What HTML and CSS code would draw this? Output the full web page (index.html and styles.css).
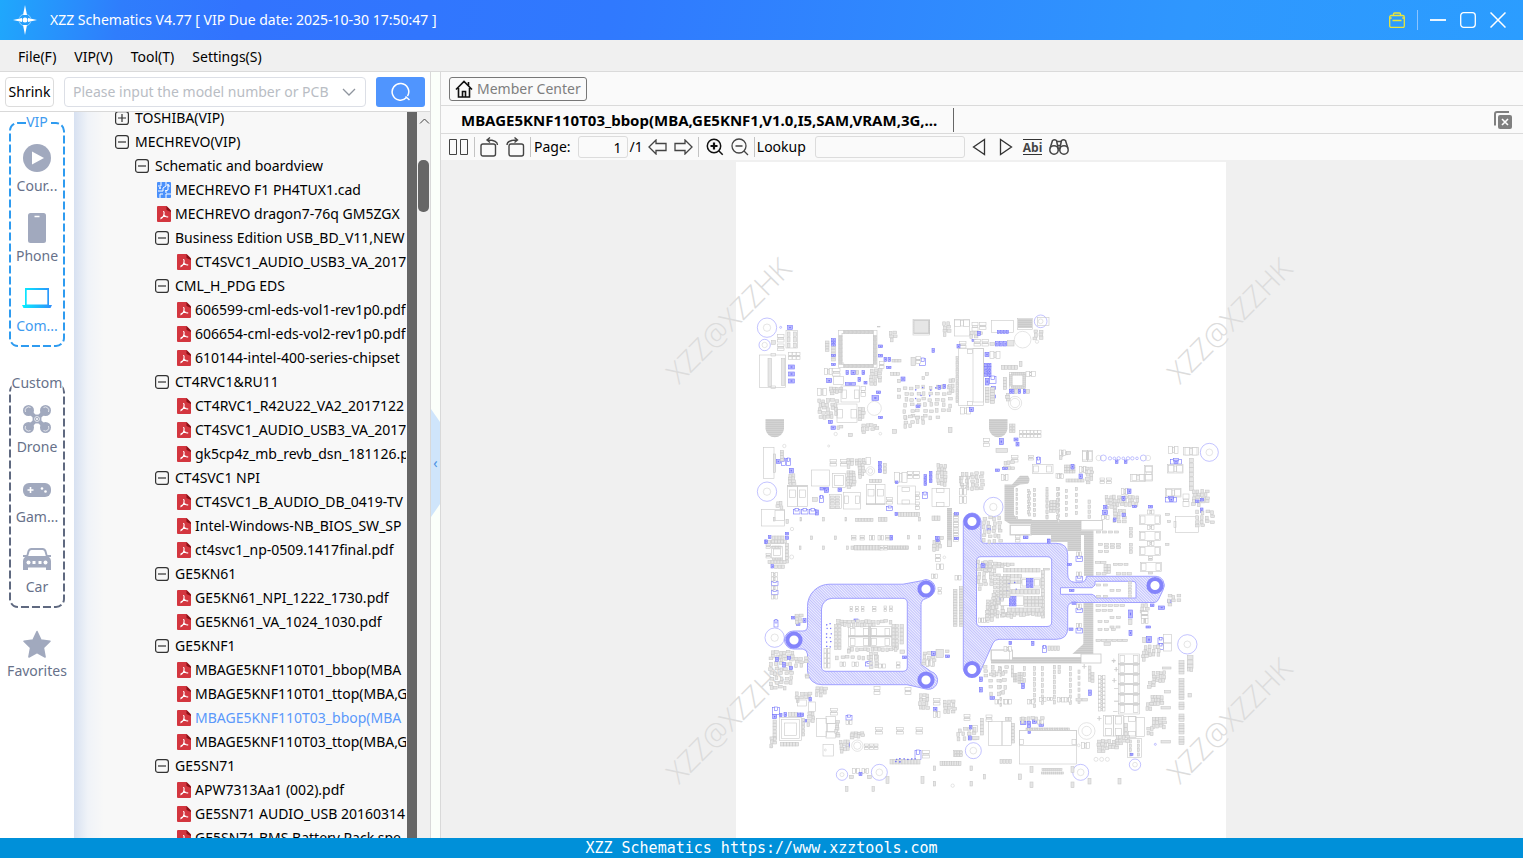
FILE: index.html
```html
<!DOCTYPE html>
<html lang="en">
<head>
<meta charset="utf-8">
<title>XZZ Schematics</title>
<link rel="stylesheet" href="styles.css">
</head>
<body>
<svg width="0" height="0" class="defs" aria-hidden="true">
  <defs>
    <linearGradient id="cyan" x1="0" x2="1"><stop offset="0" stop-color="#06f0ff"/><stop offset="1" stop-color="#2f8dfb"/></linearGradient>
    <symbol id="i-pdf" viewBox="0 0 14 16"><path d="M1 0H9.500L14 4.500V15a1 1 0 0 1-1 1H1a1 1 0 0 1-1-1V1a1 1 0 0 1 1-1z" fill="#d3363f"/><path d="M9.500 0L14 4.500V6L9.500 4z" fill="#8c1219"/><path d="M6.500 5.500c.8 0 .8 2.800-.1 4.600-.7 1.400-1.800 2.700-2.600 2.600M6.800 8.500c1 1.800 2.600 2.700 4 2.400M4 11.800c1.500-1.300 3.500-1.700 5-1.500" fill="none" stroke="#fff" stroke-width="1.100" stroke-linecap="round"/></symbol>
    <symbol id="i-cad" viewBox="0 0 14 16"><rect width="14" height="16" rx="1" fill="#4a90fb"/><path d="M4 0v4H1M9 0v4l-3 2v3H1M13 4h-2v4L8 9M3 16v-4h3M9 16v-4h5M9 8v3" fill="none" stroke="#fff"/><circle cx="3" cy="6" r="1" fill="#fff"/><circle cx="11" cy="3" r="1" fill="#fff"/></symbol>
    <symbol id="i-minus" viewBox="0 0 14 14"><rect x=".6" y=".6" width="12.800" height="12.800" rx="2.500" fill="#f8f8f8" stroke="#333" stroke-width="1.200"/><path d="M3 7h8" stroke="#333" stroke-width="1.200"/></symbol>
    <symbol id="i-plus" viewBox="0 0 14 14"><rect x=".6" y=".6" width="12.800" height="12.800" rx="2.500" fill="#f8f8f8" stroke="#333" stroke-width="1.200"/><path d="M3 7h8M7 3v8" stroke="#333" stroke-width="1.200"/></symbol>
    <pattern id="hatch" width="2" height="2" patternUnits="userSpaceOnUse" patternTransform="rotate(-45)"><rect width="2" height="2" fill="#eeeeff"/><rect width="1" height="2" fill="#c2c2fc"/></pattern>
    <pattern id="lines" width="4" height="2" patternUnits="userSpaceOnUse"><rect width="4" height="2" fill="#d3d3d3"/><rect width="4" height="1" fill="#cacaca"/></pattern>
  </defs>
</svg>
<div class="app">
  <header class="titlebar">
    <svg class="logo" viewBox="0 0 24 30"><path d="M12 0l2 10h-4zM12 30l-2-10h4zM0 15l9-2v4zM24 15l-9-2v4z" fill="#fff"/><circle cx="12" cy="15" r="2.500" fill="#fff"/><circle cx="12" cy="15" r="6" fill="none" stroke="#8fd0ff" stroke-dasharray="5 4.400" stroke-dashoffset="-2"/></svg>
    <h1 class="title">XZZ Schematics V4.77 [ VIP Due date: 2025-10-30 17:50:47 ]</h1>
    <div class="window-tools">
      <button class="win" aria-label="Licence"><svg width="16" height="16" viewBox="0 0 16 16" fill="none" stroke="#e8e53c" stroke-width="1.300"><rect x=".7" y="3.500" width="14.600" height="12" rx="1.500"/><path d="M4.500 3.500V2a1 1 0 0 1 1-1h5a1 1 0 0 1 1 1v1.500M3.500 8.500h9M.7 6h2M13.300 6h2"/></svg></button>
      <span class="win-sep"></span>
      <button class="win" aria-label="Minimize"><svg width="16" height="16" viewBox="0 0 16 16"><path d="M0 8h16" stroke="#fff" stroke-width="1.800"/></svg></button>
      <button class="win" aria-label="Maximize"><svg width="16" height="16" viewBox="0 0 16 16"><rect x=".7" y=".7" width="14.600" height="14.600" rx="3" fill="none" stroke="#fff" stroke-width="1.300"/></svg></button>
      <button class="win" aria-label="Close"><svg width="16" height="16" viewBox="0 0 16 16"><path d="M.5.5l15 15M15.500.5l-15 15" stroke="#fff" stroke-width="1.500"/></svg></button>
    </div>
  </header>
  <nav class="menubar">
    <a href="#file">File(F)</a><a href="#vip">VIP(V)</a><a href="#tool">Tool(T)</a><a href="#settings">Settings(S)</a>
  </nav>
  <main class="workspace">
    <section class="left">
      <form class="search">
        <button type="button" class="shrink">Shrink</button>
        <label class="combo"><input type="text" aria-label="Model number" placeholder="Please input the model number or PCB"><svg width="14" height="8" viewBox="0 0 14 8"><path d="M1 1l6 6 6-6" fill="none" stroke="#8f959e" stroke-width="1.300"/></svg></label>
        <button type="button" class="go" aria-label="Search"><svg width="20" height="20" viewBox="0 0 20 20"><path d="M15.500 15.500a8.300 8.300 0 1 1 1-1.300M14.500 14.500l4 3.500" fill="none" stroke="#fff" stroke-width="1.500"/></svg></button>
      </form>
      <div class="browse">
        <aside class="rail">
          <div class="box vip">
            <svg class="dash" aria-hidden="true"><rect x="1" y="1" rx="8"/></svg>
            <span class="legend">VIP</span>
            <a class="cat" href="#courses"><svg viewBox="0 0 28 28" width="28" height="30"><circle cx="14" cy="14" r="14" fill="#a1a9be"/><path d="M9 7.500l12 6.500-12 6.500z" fill="#fff"/></svg>Cour...</a>
            <a class="cat" href="#phone"><svg viewBox="0 0 18 30" width="18" height="30"><rect width="18" height="30" rx="2.500" fill="#a1a9be"/><path d="M6.500 3.500h5" stroke="#fff" stroke-width="1.500"/></svg>Phone</a>
            <a class="cat on" href="#computer"><svg viewBox="0 0 30 30" width="30" height="30"><path d="M3 5h24v17h3l-1.500 3h-27L0 22h3zM4.700 6.900V21.500h20.600V6.900z" fill="url(#cyan)" fill-rule="evenodd"/></svg>Com...</a>
          </div>
          <div class="box custom">
            <svg class="dash" aria-hidden="true"><rect x="1" y="1" rx="8"/></svg>
            <span class="legend">Custom</span>
            <a class="cat" href="#drone"><svg viewBox="0 0 28 30" width="28" height="30"><g fill="#a1a9be"><circle cx="5.500" cy="6.500" r="5.500"/><circle cx="22.500" cy="6.500" r="5.500"/><circle cx="5.500" cy="23.500" r="5.500"/><circle cx="22.500" cy="23.500" r="5.500"/><circle cx="14" cy="15" r="4.500"/></g><path d="M5.500 6.500l17 17M22.500 6.500l-17 17" stroke="#a1a9be" stroke-width="4"/><g fill="none" stroke="#fff" stroke-width=".7"><path d="M2.500 8a3.500 3.500 0 0 1 5-4.500M20.500 3.500a3.500 3.500 0 0 1 5 4.500M2.500 22a3.500 3.500 0 0 0 5 4.500M20.500 26.500a3.500 3.500 0 0 0 5-4.500"/><circle cx="14" cy="15" r="2.500"/></g><circle cx="14" cy="15" r="1" fill="#fff"/></svg>Drone</a>
            <a class="cat" href="#game"><svg viewBox="0 0 28 30" width="28" height="30"><rect y="9" width="28" height="14" rx="6" fill="#a1a9be"/><path d="M4.500 16h6M7.500 13v6" stroke="#fff" stroke-width="1.600"/><circle cx="19" cy="14.500" r="1.300" fill="#fff"/><circle cx="22.500" cy="17.500" r="1.300" fill="#fff"/></svg>Gam...</a>
            <a class="cat" href="#car"><svg viewBox="0 0 28 30" width="28" height="30"><path d="M8 4h12q2.500 0 3.300 2.500L24.500 11H28v2h-2q2 1.500 2 4v9h-5v-2.500H5V26H0v-9q0-2.500 2-4H0v-2h3.500l1.200-4.500Q5.500 4 8 4zM8.500 6Q7 6 6.500 7.500L5.200 12h17.600l-1.300-4.500Q21 6 19.500 6z" fill="#a1a9be" fill-rule="evenodd"/><g fill="#fff"><circle cx="5.500" cy="18.500" r="2"/><circle cx="22.500" cy="18.500" r="2"/><rect x="9.500" y="17" width="3" height="3"/><rect x="15.500" y="17" width="3" height="3"/></g></svg>Car</a>
          </div>
          <a class="cat fav" href="#favorites"><svg viewBox="0 0 28 30" width="28" height="30"><path d="M14 1.500l4 8.500 9 1.200-6.600 6.400 1.700 9.400-8.100-4.500-8.100 4.500 1.700-9.400L1 11.200 10 10z" fill="#a1a9be" stroke="#a1a9be" stroke-width="1.500" stroke-linejoin="round"/></svg>Favorites</a>
        </aside>
        <ul class="tree" id="tree"></ul>
        <div class="strip"></div>
        <div class="scroll"><svg width="12" height="8" viewBox="0 0 12 8"><path d="M2 6.500l4.500-4.500L11 6.500" fill="none" stroke="#444"/></svg><span class="thumb"></span></div>
      </div>
    </section>
    <div class="splitter"><button class="fold" aria-label="Collapse panel">‹</button></div>
    <section class="right">
      <div class="member-row"><a class="member" href="#member"><svg width="18" height="18" viewBox="0 0 18 18" fill="none" stroke="#111" stroke-width="1.600"><path d="M1 9.500L9 1.500l8 8M3.500 8v9h11V8M7.500 17v-5.500h3V17M13.500 2v4"/></svg>Member Center</a></div>
      <div class="tabs"><button class="tab">MBAGE5KNF110T03_bbop(MBA,GE5KNF1,V1.0,I5,SAM,VRAM,3G,...</button>
        <button class="closeall" aria-label="Close all tabs"><svg width="18" height="18" viewBox="0 0 18 18"><path d="M1 14.500V3a2 2 0 0 1 2-2h12" fill="none" stroke="#808080" stroke-width="2"/><rect x="4" y="4" width="14" height="14" rx="2" fill="#808080"/><path d="M8 8l6 6M14 8l-6 6" stroke="#fff" stroke-width="1.600"/></svg></button></div>
      <div class="toolbar">
        <button class="tb" aria-label="Two pages"><svg width="20" height="18" viewBox="0 0 20 18" fill="none" stroke="#444"><path d="M.5 1.500h7v15h-7zM11.500 1.500h7v15h-7z"/></svg></button>
        <i class="sep"></i>
        <button class="tb" aria-label="Rotate left"><svg width="19" height="20" viewBox="0 0 19 20" fill="none" stroke="#444" stroke-width="1.400"><rect x="1" y="7" width="14.500" height="12" rx="2"/><path d="M17.500 8q0-5-10-5M10 .5L7 3l3 2.500"/></svg></button>
        <button class="tb next" aria-label="Rotate right"><svg width="19" height="20" viewBox="0 0 19 20" fill="none" stroke="#444" stroke-width="1.400"><rect x="3" y="7" width="14.500" height="12" rx="2"/><path d="M1 8q0-5 10-5M8.500.5l3 2.500-3 2.500"/></svg></button>
        <i class="sep"></i>
        <label class="page">Page: <input type="text" value="1"></label><span class="total">/1</span>
        <button class="tb" aria-label="Previous page"><svg width="19" height="16" viewBox="0 0 19 16"><path d="M1 8l7-7v3.500h10v7H8V15z" fill="none" stroke="#444" stroke-width="1.300"/></svg></button>
        <button class="tb next" aria-label="Next page"><svg width="19" height="16" viewBox="0 0 19 16"><path d="M18 8l-7-7v3.500H1v7h10V15z" fill="none" stroke="#444" stroke-width="1.300"/></svg></button>
        <i class="sep"></i>
        <button class="tb next" aria-label="Zoom in"><svg width="18" height="18" viewBox="0 0 18 18" fill="none" stroke="#111" stroke-width="1.500"><circle cx="8" cy="8" r="6.700"/><path d="M12.700 12.700l4 4"/><path d="M4.500 8h7M8 4.500v7" stroke-width="2.200"/></svg></button>
        <button class="tb next" aria-label="Zoom out"><svg width="18" height="18" viewBox="0 0 18 18" fill="none" stroke="#444" stroke-width="1.300"><circle cx="8" cy="8" r="7"/><path d="M13 13l4 4M4.500 8h7"/></svg></button>
        <i class="sep"></i>
        <label class="lookup">Lookup <input type="text"></label>
        <button class="tb next" aria-label="Find previous"><svg width="14" height="18" viewBox="0 0 14 18"><path d="M12.500 1.500v15L1.500 9z" fill="none" stroke="#333" stroke-width="1.300"/></svg></button>
        <button class="tb far" aria-label="Find next"><svg width="14" height="18" viewBox="0 0 14 18"><path d="M1.500 1.500v15L12.500 9z" fill="none" stroke="#333" stroke-width="1.300"/></svg></button>
        <button class="tb abi">Abi</button>
        <button class="tb" aria-label="Search all"><svg width="20" height="18" viewBox="0 0 20 18" fill="none" stroke="#444" stroke-width="1.500"><circle cx="5" cy="12" r="4.200"/><circle cx="15" cy="12" r="4.200"/><path d="M1 10.500L3.500 2.500q2-1.500 4 0L9.300 11M19 10.500L16.500 2.500q-2-1.500-4 0L10.700 11M7.800 3.500h4.400M9 7.500h2M9.200 12h1.600"/></svg></button>
      </div>
      <div class="viewer">
        <svg class="board" viewBox="441 160 1082 678" preserveAspectRatio="xMidYMin slice" role="img" aria-label="Circuit board, bottom side">
          <rect x="736" y="162" width="490" height="700" fill="#fff"/>
          <g class="mark">
            <text transform="translate(736 328) rotate(-45)">XZZ@XZZHK</text>
            <text transform="translate(1237 328) rotate(-45)">XZZ@XZZHK</text>
            <text transform="translate(736 728) rotate(-45)">XZZ@XZZHK</text>
            <text transform="translate(1237 728) rotate(-45)">XZZ@XZZHK</text>
          </g>
          <g fill="url(#lines)">
            <path d="M765.500 419H784v10a9.300 9.300 0 0 1-18.500 0zM989 419h18.500v10a9.300 9.300 0 0 1-18.500 0zM947 508h5v39h-5zM913.500 320h16.500v14h-16.500zM1018 319h14v9h-14z"/>
            <path d="M1004.500 484.500H1012L1020 475.700h8q3 4 0 8L1020 484.500l-6 3V515l4 4h13.700v5H1010l-5.500-3.500z"/>
            <path d="M1031 520h50v10.500h12.500V576H1084v-41h-3v16h-13.500v-9H1051v-7h-20zM1083.500 603h9.800v51h-21l11-10zM991 657h90v6.500H991z"/>
          </g>
          <g fill="#fff" stroke="#c8c8c8" stroke-width=".8"><rect x="1010" y="525" width="21.500" height="10"/><rect x="1081" y="520.500" width="21.500" height="9.500"/><rect x="1081" y="654" width="20" height="9"/><rect x="991" y="650" width="21.500" height="10"/></g>
          <g class="sink">
            <path fill-rule="evenodd" d="M807.500 606.500A22 22 0 0 1 830 584.200H903L921.500 580.800A9 9 0 0 1 935 589Q934 596 926 598.500 921 600 921 604.500V664.500L931 671.500A9 9 0 0 1 926 689L913 686 907 684.700H822A14 14 0 0 1 807.500 671V654Q807 650 803 649H793.500A9 9 0 0 1 793.500 631H802.500Q807.500 631 807.500 626zM821.500 609A11 11 0 0 1 832 598.300H903Q907.300 598.500 907.300 603V667Q907.300 671.300 903 671.300H826Q821.500 671.300 821.500 667z"/>
            <path fill-rule="evenodd" d="M963.300 521a8.900 8.900 0 0 1 17.700 0V539Q981 543.300 985.500 543.300H1056Q1067.700 543.300 1067.700 555V574Q1067.700 582 1075 582.300H1081Q1086 582 1086.500 576.300H1155A9 9 0 0 1 1163 590L1158.500 599.500Q1157 602.500 1154 602.500H1074Q1067.700 602.500 1067.700 608V628Q1067.700 639.300 1056 639.300H999Q995 639.300 993 643L981 670A9 9 0 0 1 963.300 669zM976.500 561Q976.500 556.700 981 556.700H1047Q1051.700 556.700 1051.700 561V622Q1051.700 626.500 1047 626.500H981Q976.500 626.500 976.500 622zM1060.500 587.700H1092L1095 585V581.300H1133Q1136 581.300 1136 584V598H1097Q1095 598 1095 596L1092 594.300H1060.500z"/>
          </g>
          <g fill="#fff" stroke="#8484fb" stroke-width="4"><circle cx="926" cy="589" r="6.600"/><circle cx="926" cy="680" r="6.600"/><circle cx="794" cy="640" r="6.600"/><circle cx="972" cy="521.500" r="6.600"/><circle cx="972" cy="669.500" r="6.600"/><circle cx="1155" cy="585.500" r="6.600"/></g>
          <g id="parts"></g>
        </svg>
      </div>
    </section>
  </main>
  <footer class="footer">XZZ Schematics https://www.xzztools.com</footer>
</div>
<script src="app.js"></script>
</body>
</html>
```

FILE: styles.css
```css
* { box-sizing: border-box; }
body { margin: 0; font: 14px/20px "Noto Sans", "Open Sans", sans-serif; color: #000; background: #fff; }
button, input { font: inherit; color: inherit; margin: 0; padding: 0; }
button { background: none; border: 0; cursor: pointer; }
a { color: inherit; text-decoration: none; }
svg { display: block; flex: none; }
.defs { position: absolute; }
.app { display: flex; flex-direction: column; height: 100vh; overflow: hidden; }

.titlebar { display: flex; align-items: center; height: 40px; flex: none; padding: 0 17px 0 13px; color: #fff; background: linear-gradient(100deg, #1fa8fc 0, #2f7dfc 8%, #3273fe 16%, #3079fe 40%, #2f97fe 78%, #2b9dff 100%); }
.logo { width: 24px; height: 30px; }
.title { margin: 0 auto 0 13px; font-size: 14px; font-weight: 400; }
.window-tools { display: flex; align-items: center; gap: 14px; }
.win { display: block; }
.win-sep { width: 1px; height: 20px; margin: 0 -2px; background: #8cc4ff; }

.menubar { display: flex; gap: 18px; align-items: center; height: 32px; flex: none; padding: 2px 18px 0; background: #f0f0f0; border-bottom: 1px solid #dadada; }
.workspace { display: flex; flex: 1; min-height: 0; }
.left { display: flex; flex-direction: column; width: 431px; flex: none; border-right: 1px solid #d9d9d9; }
.search { display: flex; align-items: center; height: 40px; flex: none; padding: 0 5px; border-bottom: 1px solid #d9d9d9; }
.shrink { width: 49px; height: 30px; margin-right: 10px; border: 1px solid #dcdcdc; border-radius: 4px; background: #fff; white-space: nowrap; }
.combo { display: flex; align-items: center; flex: 1; height: 30px; margin-right: 10px; padding: 0 9px 0 8px; border: 1px solid #dcdfe6; border-radius: 4px; }
.combo input { flex: 1; min-width: 0; border: 0; outline: 0; background: none; }
.combo input::placeholder { color: #b9bdc4; opacity: 1; }
.go { display: flex; align-items: center; justify-content: center; width: 49px; height: 30px; border-radius: 3px; background: #5095fe; }

.browse { display: flex; flex: 1; min-height: 0; }
.rail { width: 74px; flex: none; padding: 10px 9px 0; background: #fff; color: #67718a; }
.box { position: relative; height: 225px; margin-bottom: 36px; padding-top: 21px; color: #67718a; }
.dash { position: absolute; inset: 0; width: 100%; height: 100%; overflow: visible; }
.dash rect { width: calc(100% - 2px); height: calc(100% - 2px); fill: none; stroke: #5f6980; stroke-width: 2; stroke-dasharray: 8 3; }
.vip .dash rect { stroke: #2e9bf0; }
.legend { position: absolute; top: -10px; left: 50%; transform: translateX(-50%); background: #fff; }
.vip .legend, .cat.on { color: #3e9bf0; }
.cat { position: relative; display: flex; flex-direction: column; align-items: center; height: 70px; gap: 3px; white-space: nowrap; }
.fav { gap: 1px; margin: -14px -9px 0; }

.tree { flex: 1; min-width: 0; margin: 0; padding: 0 1px 0 41px; list-style: none; overflow: hidden; background: linear-gradient(90deg, #d7e1f1 0, #f0f3f8 14px, #f8f8f8 30px); }
.tree li { display: flex; align-items: center; gap: 5px; height: 24px; white-space: pre; overflow: hidden; }
.tree li:first-child { margin-top: -6px; }
.l1 { margin-left: 20px; }
.l2 { margin-left: 40px; }
.l3 { margin-left: 60px; }
.tree .file { padding-left: 2px; gap: 4px; }
.tree .folder { gap: 6px; }
.tree .active { color: #5b98fb; }
.strip { width: 10px; flex: none; background: #666; }
.scroll { width: 13px; flex: none; padding: 5px 1px 0; background: #f0f0f0; }
.thumb { display: block; width: 11px; height: 52px; margin-top: 35px; border-radius: 5px; background: #666; }

.splitter { display: flex; align-items: center; width: 10px; flex: none; background: #fbfffa; border-right: 1px solid #d9d9d9; }
.fold { width: 9px; height: 108px; margin-top: 16px; background: #cfe5fb; color: #4a90e2; line-height: 12px; clip-path: polygon(0 0, 100% 12%, 100% 88%, 0 100%); }

.right { display: flex; flex-direction: column; flex: 1; min-width: 0; background: #fafafa; }
.member-row { display: flex; align-items: center; height: 34px; flex: none; padding: 0 8px; border-bottom: 1px solid #dadada; }
.member { display: flex; align-items: center; gap: 4px; height: 24px; padding: 0 5px; border: 1px solid #777; border-radius: 3px; color: #7e7e7e; }
.tabs { display: flex; align-items: center; height: 28px; flex: none; padding: 0 11px 0 20px; border-bottom: 1px solid #dadada; }
.tab { height: 24px; padding-right: 16px; border-right: 1px solid #666; font-size: 15px; font-weight: 700; white-space: nowrap; }
.closeall { margin-left: auto; }
.toolbar { display: flex; align-items: center; height: 26px; flex: none; padding: 0 8px; gap: 5px; }
.sep { width: 1px; height: 20px; background: #c4c4c4; }
.next { margin-left: 2px; }
.far { margin-left: 8px; }
.page, .lookup { display: flex; align-items: center; white-space: nowrap; }
.page { gap: 7px; margin-left: -2px; }
.lookup { gap: 9px; margin-left: -3px; }
.toolbar input { height: 22px; padding: 0 5px; border: 1px solid #dcdcdc; border-radius: 3px; background: #fafafa; }
.page input { width: 50px; text-align: right; }
.lookup input { width: 150px; }
.total { margin-left: -3px; }
.abi { height: 16px; margin: 0 2px 0 5px; border: solid #333; border-width: 1px 0; font: 700 12px/13px "Open Sans", sans-serif; color: #444; }

.viewer { flex: 1; min-height: 0; background: #f0f0f0; overflow: hidden; }
.board { width: 100%; height: 100%; }
.mark text { font: 300 29px "Open Sans", sans-serif; text-anchor: middle; fill: #dcdcdc; }
.sink { fill: url(#hatch); stroke: #a0a0ff; stroke-width: 1; }

.footer { height: 20px; flex: none; background: #0090d9; color: #fff; text-align: center; font: 15px/20px "DejaVu Sans Mono", "Liberation Mono", monospace; }
```

FILE: app.js
```js
// Tree rows: indent level, kind (+ closed folder, - open folder, p pdf, c cad), label.
const rows = [
  [0, '+', 'TOSHIBA(VIP)'], [0, '-', 'MECHREVO(VIP)'], [1, '-', 'Schematic and boardview'],
  [2, 'c', 'MECHREVO F1 PH4TUX1.cad'], [2, 'p', 'MECHREVO dragon7-76q GM5ZGX'],
  [2, '-', 'Business Edition USB_BD_V11,NEW'], [3, 'p', 'CT4SVC1_AUDIO_USB3_VA_2017'],
  [2, '-', 'CML_H_PDG EDS'], [3, 'p', '606599-cml-eds-vol1-rev1p0.pdf'], [3, 'p', '606654-cml-eds-vol2-rev1p0.pdf'],
  [3, 'p', '610144-intel-400-series-chipset'], [2, '-', 'CT4RVC1&RU11'], [3, 'p', 'CT4RVC1_R42U22_VA2_2017122'],
  [3, 'p', 'CT4SVC1_AUDIO_USB3_VA_2017'], [3, 'p', 'gk5cp4z_mb_revb_dsn_181126.p'],
  [2, '-', 'CT4SVC1 NPI'], [3, 'p', 'CT4SVC1_B_AUDIO_DB_0419-TV'], [3, 'p', 'Intel-Windows-NB_BIOS_SW_SP'],
  [3, 'p', 'ct4svc1_np-0509.1417final.pdf'], [2, '-', 'GE5KN61'], [3, 'p', 'GE5KN61_NPI_1222_1730.pdf'],
  [3, 'p', 'GE5KN61_VA_1024_1030.pdf'], [2, '-', 'GE5KNF1'], [3, 'p', 'MBAGE5KNF110T01_bbop(MBA'],
  [3, 'p', 'MBAGE5KNF110T01_ttop(MBA,G'], [3, 'p', 'MBAGE5KNF110T03_bbop(MBA', 'active'],
  [3, 'p', 'MBAGE5KNF110T03_ttop(MBA,G'], [2, '-', 'GE5SN71'], [3, 'p', 'APW7313Aa1 (002).pdf'],
  [3, 'p', 'GE5SN71 AUDIO_USB 20160314'], [3, 'p', 'GE5SN71 BMS Battery Pack spe']
];
const icons = { '+': ['i-plus', 14], '-': ['i-minus', 14], p: ['i-pdf', 16], c: ['i-cad', 16] };
document.getElementById('tree').innerHTML = rows.map(([lv, kind, label, state = '']) => {
  const [id, h] = icons[kind];
  const type = h === 16 ? 'file' : 'folder';
  return `<li class="l${lv} ${type} ${state}"><svg width="14" height="${h}"><use href="#${id}"/></svg>${label.replace('&', '&amp;')}</li>`;
}).join('');

// Board parts, three units to a pixel, per zone origin.
// g/b: grey or blue pad "x y w h [nx ny dx dy]"; o/O: grey or blue outline; c/C: grey or blue circle "x y r";
// t: two-pad part; s/S: loose group of small parts "x y w h count".
const zones = [
  [736, 300, `
C 93 83 29;c 93 83 11;C 86 135 17;c 86 135 8;C 134 82 3;b 155 77 14 11;o 150 92 35 52;g 154 96 8 13 1 3 1 17;g 173 96 8 13 1 3 1 17;t 124 104 20 22;t 124 132 20 20;g 107 122 11 11;t 157 158 11 20 3 1 12 1;
o 70 165 78 97;g 96 176 10 84 1 1;g 137 176 10 80 1 1;o 105 160 14 8;o 105 258 14 8;b 158 195 17 12 1 3 1 21;
o 308 91 115 112;o 318 101 95 92;g 322 91 3 9 23 1 4 1;g 322 194 3 9 23 1 4 1;g 309 106 9 3 1 22 1 4;g 413 106 9 3 1 22 1 4;c 320 190 3;
g 268 123 11 7 1 4 1 8;b 287 116 11 7 1 3 1 8;g 287 140 11 7 1 5 1 9;b 287 163 11 7;b 287 190 11 7;b 428 135 12 8;b 428 163 12 8;b 444 172 8 12;b 456 172 8 12;g 468 178 9 8 3 1 9 1;t 430 185 14 20;b 452 199 13 7;
s 460 90 20 35 5;g 424 80 8 1;b 330 212 7 12;b 345 212 14 12;g 360 212 8 12;b 378 212 8 12;t 266 206 22 18;t 290 206 22 22;b 272 236 15 12;o 292 230 30 24;s 400 205 35 50 14;b 328 248 30 8;b 366 232 8 12;b 384 244 9 8;
t 245 265 26 22;s 280 260 35 24 9;o 315 258 56 48;o 318 270 14 26;o 355 270 14 26;t 375 260 14 30;b 421 273 13 8;b 408 287 20 14;c 415 325 21;
s 245 295 60 60 24;o 303 312 60 56;o 303 328 16 26;o 345 328 16 26;s 364 320 22 42 7;b 428 349 12 7;b 277 361 12 10;b 285 378 13 10;s 300 375 16 14 2;s 375 370 50 30 9;c 299 402 5;c 433 401 4;g 337 400 12 10;g 470 388 12 12;
o 531 58 50 47;g 534 61 44 38;g 525 172 14 25;O 551 176 18 20;t 540 170 14 20;b 588 146 7 11;s 620 65 24 42 7;g 464 218 9 8 3 1 9 1;b 495 231 12 12;g 484 238 10 10;g 484 265 10 10;g 484 285 10 10;g 568 218 9 9;g 558 230 8 9;
s 500 255 150 105 46;S 530 260 90 50 7;b 606 256 8 12;b 621 253 8 12;b 540 315 12 8;s 500 345 70 40 10;g 637 382 11 16;s 638 235 16 40 6;
o 656 58 44 50;t 656 60 44 20;t 708 67 18 26;t 730 67 20 22;s 700 92 40 20 5;b 725 94 8 12;b 708 118 12 6;t 670 124 20 20;b 663 134 9 10;t 714 118 20 20;t 738 118 20 20;o 766 62 66 36;b 784 92 6 8 4 1 9 1;o 845 55 45 33;c 860 119 25;C 914 64 19;c 914 64 7;o 905 52 34 24;s 890 88 30 30 6;c 903 125 5;
b 778 125 9 13;b 790 125 9 13;b 803 125 9 13;g 814 122 20 16;g 762 128 14 8;
o 667 146 76 170;o 711 146 32 160;g 660 170 8 5 1 20 1 7;o 695 148 14 12;o 695 304 14 12;b 747 157 12 13;t 762 155 30 20;b 746 190 9 9 2 4 10 10;b 748 235 11 20;O 760 230 20 20;g 748 262 11 9 1 5 1 9;b 766 260 12 9;b 766 285 12 9;t 674 322 30 20;b 700 323 12 12;g 763 262 13 8 1 6 1 8;
o 820 217 49 48;o 828 225 33 32;g 826 217 5 8 7 1 6 1;g 826 258 5 8 7 1 6 1;g 820 224 8 4 1 6 1 6;g 861 224 8 4 1 6 1 6;g 796 196 9 12 5 1 10 1;g 850 184 8 16;t 870 214 28 16;g 802 232 10 9 1 4 1 9;b 820 268 7 12 2 1 8 1;g 836 268 8 12;b 847 268 7 12;b 862 268 7 12;g 872 268 9 12;s 808 280 10 20 3;c 837 309 20;c 837 309 14;
C 93 575 29;c 93 575 11;c 145 438 5;c 278 438 3;o 82 443 32 92;g 112 462 7 55;b 121 479 12 11;O 136 476 12 20;O 152 476 12 20;g 133 451 10 8 1 4 1 8;b 160 505 12 14;s 155 520 22 35 8;
o 226 510 54 48;t 282 478 20 20;t 314 478 20 20;s 330 475 60 25 11;s 330 510 25 55 16;o 290 520 38 42;o 296 526 26 30;b 306 564 11 10;
o 155 558 30 62;o 185 558 30 62;o 160 570 18 22;o 190 570 18 22;g 155 556 60 3;b 252 562 26 8;O 250 588 12 20;g 230 592 14 12;o 280 584 36 42;g 283 588 12 7 2 4 15 10;b 265 567 12 10;O 172 628 20 14 3 1 24 1;b 238 630 9 15;o 77 628 68 50;o 117 632 28 30;s 118 603 22 22 4;c 168 687 5;g 150 658 7 12;
o 322 577 52 50;o 325 588 12 22;o 358 588 12 22;o 391 553 28 60;o 419 553 28 60;g 391 611 56 3;o 396 568 18 20;o 424 568 18 20;c 403 513 13;c 403 513 7;s 365 490 20 42 9;o 390 472 14 22;b 427 484 9 10 1 3 1 12;g 442 490 9 9 1 3 1 11;g 400 538 10 10 4 1 9 1;O 452 620 18 12;t 452 592 18 20;
o 484 558 54 54;o 498 562 22 12;o 498 600 22 12;t 475 518 38 30;t 515 515 14 20;t 532 515 18 20;b 478 543 8 8;O 560 578 14 18;t 538 576 12 22;t 538 606 12 22;b 564 524 8 10 1 3 1 11;b 580 514 8 10 1 3 1 12;o 588 566 52 54;o 602 566 22 12;o 602 608 22 12;s 600 490 32 65 18;
s 670 515 75 65 26;o 673 530 22 26;t 670 565 22 20;t 670 590 22 20;C 772 621 29;c 772 621 11;
g 112 652 5 11;g 192 652 5 11;g 260 652 5 11;g 327 652 5 11;g 358 655 8 9 6 1 9 1;g 427 652 8 12 3 1 9 1;b 477 637 8 10;g 487 637 8 12 8 1 8 1;g 548 652 5 11;g 588 648 8 14 3 1 8 1;t 652 640 16 16 1 5 1 17;b 655 638 12 7;b 655 712 12 7;
g 224 708 6 11;g 295 708 6 11;t 346 706 14 14;t 372 706 14 14;t 400 706 16 14;t 426 706 16 14;t 448 706 14 14;b 462 706 8 14;g 514 706 6 11;g 548 706 6 11;b 598 709 12 10;g 612 709 10 10;b 148 697 10 8;b 148 710 10 8;b 97 707 8 9;g 108 708 9 10 4 1 9 1;b 86 720 6 10;g 95 722 9 9 5 1 10 1;
b 753 676 10 16;s 738 648 60 80 24;g 345 738 8 10 8 1 8 1;g 445 738 8 10 9 1 8 1;
g 820 372 8 8 2 3 9 9;t 850 392 10 20 6 1 11 1;t 742 415 18 24;b 790 416 12 18;b 834 414 12 9;b 840 427 9 11;g 780 445 35 12;t 826 466 20 20;b 778 507 12 7;s 800 480 35 30 6;O 901 473 12 18;o 889 493 62 28;o 893 498 14 18;o 932 498 14 18;t 878 466 14 14;t 960 520 18 14;s 970 455 20 20 3;t 796 524 20 18;b 800 503 14 6;
g 840 565 5 9 1 7 1 14;g 875 568 6 10 1 5 1 16;g 892 565 7 10 1 6 1 15;g 930 570 6 10 1 6 1 15;g 940 605 8 8 2 4 10 8;g 965 562 6 10 1 7 1 16;b 862 709 12 7;b 935 717 7 10;o 823 676 60 28;t 838 706 14 20`],
  [1000, 400, `
C 628 157 27;c 628 157 10;t 506 140 28 20;o 551 143 44 22;t 555 143 36 22;O 512 178 32 14;b 522 180 12 10;o 503 193 46 26;t 505 196 42 20;g 568 175 12 13 1 7 1 14;o 497 265 46 26;t 499 268 42 20;O 497 292 32 14;b 508 293 12 12;
t 549 282 18 38;s 575 268 50 50 18;b 587 300 10 7;b 601 295 10 8;b 601 324 8 14;o 527 350 68 48;o 522 364 6 18;s 586 330 55 55 14;g 497 340 12 6;g 503 362 9 6;g 497 430 10 6;
o 247 152 15 32;o 263 152 15 32;t 248 154 28 26;c 296 174 8;C 310 174 9;C 330 175 5;C 343 175 4;C 356 175 5;C 370 175 4;C 384 175 5;C 397 175 5;C 411 175 4;C 430 174 9;c 444 174 8;b 346 180 8 10;b 373 180 8 10;
o 392 224 44 20;t 396 224 36 18;o 433 197 25 46;t 436 200 20 40;g 193 195 8 8 4 3 8 8;b 213 193 9 14;t 178 150 18 16;g 200 154 12 9;t 172 222 18 14;g 198 237 9 9 6 1 9 1;t 238 200 20 18;b 237 222 10 14;s 255 200 22 50 9;t 300 234 14 16;t 320 234 14 16;
s 315 285 100 40 30;t 364 266 20 18;b 383 267 10 14;b 366 289 9 12;b 398 316 12 7;b 311 316 10 11;b 308 332 14 12;s 338 325 40 42 12;b 340 354 8 10;b 366 341 10 8;t 305 346 22 12;
g 138 262 6 10 1 6 1 17;g 150 302 9 8 3 3 9 9;g 170 262 6 10 1 6 1 17;g 196 268 6 10 1 5 1 18;g 226 262 6 10 1 5 1 18;g 264 300 8 10 1 4 1 15;g 85 275 6 9 1 5 1 16;
o 418 345 64 28;o 422 348 13 22;o 465 348 13 22;o 418 394 64 28;o 422 397 13 22;o 465 397 13 22;o 418 439 64 28;o 422 442 13 22;o 465 442 13 22;o 421 487 64 28;o 425 490 13 22;o 468 490 13 22;b 446 316 12 8;t 442 330 20 12;t 442 376 20 12;t 442 424 20 12;t 446 470 12 12;g 446 516 12 6;
g 290 393 12 6 4 1 18 1;g 296 430 12 6 3 1 18 1;g 314 440 12 6 3 1 18 1;g 296 452 12 6 2 1 18 1;g 350 430 12 6;g 388 382 9 8 1 3 1 11;g 388 430 9 8 1 3 1 11;g 286 484 16 6 2 1 16 1;g 312 494 9 8 2 3 10 9;g 340 490 12 6 3 1 16 1;g 290 518 12 7 2 1 16 1;g 350 518 12 7 3 1 16 1;
g 290 552 12 6 2 1 20 1;g 330 568 12 6 2 1 20 1;g 290 586 12 6 2 1 20 1;g 386 545 8 7 1 5 1 10;
O 228 470 20 14;t 230 456 14 12;b 202 490 12 7;O 228 530 20 13;t 230 516 14 12;O 228 625 20 13;t 230 612 14 12;b 216 606 12 7;O 228 686 20 13;t 230 670 14 12;b 207 684 12 7;b 208 568 14 7;b 142 418 8 11;b 70 408 14 8;
g 288 614 14 6 5 1 18 1;g 288 628 14 6 3 1 18 1;g 294 662 12 6 2 1 20 1;g 330 650 12 6 2 1 20 1;g 294 686 12 6 3 1 20 1;g 330 678 12 6 2 1 18 1;g 288 718 14 7 6 1 16 1;b 386 630 11 24;b 387 691 9 16;g 386 658 10 16;g 312 728 20 8;
b 451 612 11 8;b 476 618 18 10;b 502 600 12 8;s 500 582 40 38 7;s 420 610 25 50 10;t 424 635 20 20;b 438 678 14 6;t 424 655 20 16;g 428 712 10 16;b 440 710 14 18;O 474 714 16 16;O 474 732 16 16;o 490 703 25 26;o 490 729 25 24;C 562 733 29;c 562 733 10;s 430 735 50 30 12;
g 10 506 11 10 10 1 11 1;g 10 524 11 10 5 1 11 1;g 10 540 11 10 5 1 11 1;o 62 534 60 30;o 66 538 14 20;o 104 538 14 20;b 80 535 8 8 2 3 11 10;g 0 568 11 14 10 1 12 1;g 124 512 10 10 1 13 1 11;
o 0 588 70 28;b 28 590 9 8 2 3 11 10;g 72 590 11 9 5 3 11 10;g 22 624 11 12 9 1 12 1;s 0 636 130 12 18;g -20 522 10 8 2 8 11 12;g -40 600 9 8 3 5 11 10;s -60 485 60 28 14;b -56 490 10 8;b -70 482 6 8;s 0 488 40 14 5;g 130 505 18 5;S 20 545 40 40 4;
b 27 724 8 10;b 95 724 7 12;O 127 738 12 20;g 144 738 7 14 4 1 9 1;t 12 740 22 14`],
  [740, 540, `
t 78 12 14 14;t 78 40 14 14;g 94 0 9 9 5 1 9 1;g 136 10 10 9 1 6 1 10;g 84 62 9 9 6 1 9 1;g 98 18 7 7 3 1 9 1;
o 94 20 34 34;o 101 27 20 20;g 98 54 6 6 4 1 8 1;c 155 51 6;b 76 0 6 10;b 93 74 8 10;g 104 75 9 10 3 1 10 1;
O 94 124 20 12;O 94 151 20 12;t 94 98 18 12;t 94 111 18 12;t 94 138 18 12;t 94 165 18 12;g 178 18 5 11;g 248 18 5 11;g 320 18 5 11;g 343 17 8 13 9 1 9 1;t 420 16 10 14 2 1 12 1;g 442 18 6 9 8 1 8 1;g 536 18 5 11;s 577 0 25 30 8;b 588 0 10 4;g 622 0 13 20;t 587 44 14 20;t 590 72 20 16;c 613 52 4;g 640 148 11 7 1 14 1 8;g 658 140 11 7 1 15 1 8;t 574 102 18 14;t 594 142 10 20;t 645 106 18 14;
O 102 241 12 20;C 104 293 29;c 104 293 11;b 154 229 11 8;b 169 248 11 8;b 189 236 9 11;s 165 222 20 26 6;
t 330 200 8 14 3 1 17 1;t 398 200 10 14;t 432 198 8 16;t 448 198 10 16;g 326 287 128 4;g 386 260 5 58;o 326 260 64 30;o 390 260 64 30;o 326 290 64 30;o 390 290 64 30;o 331 265 14 22 1 2 1 30;o 371 265 14 22 1 2 1 30;o 395 265 14 22 1 2 1 30;o 435 265 14 22 1 2 1 30;b 342 237 12 8;s 285 238 170 20 24;S 258 250 22 80 12;g 284 254 9 9 2 7 10 11;g 456 254 9 9 2 7 10 11;g 480 254 10 10 1 5 1 12;s 320 322 150 12 14;
t 252 325 18 14 1 4 1 15;t 300 366 16 14;t 336 366 20 14;O 376 366 20 12;s 385 335 30 50 10;s 280 345 220 10 8;t 416 372 20 12;b 488 348 12 8;t 470 366 10 18;g 480 330 14 10;
s 92 330 70 24 12;s 85 350 75 100 34;b 107 352 8 12;b 128 367 8 14;b 142 350 10 8;b 148 380 10 8;s 162 350 40 30 8;s 192 400 12 12 2;
s 545 335 40 40 12;b 575 335 12 12;g 588 328 22 24;b 617 345 12 8;g 617 330 10 8;t 558 360 20 18;b 718 411 9 14;b 718 442 9 14;o 755 330 54 30;
s 165 455 50 30 9;s 225 438 35 30 8;t 402 440 18 24;t 495 442 18 22;o 172 480 28 18;o 205 486 22 28;b 207 473 7 10;s 200 515 25 40 7;
O 98 503 20 20;b 98 524 12 12;b 118 520 8 10;b 132 518 8 12;g 145 518 9 12 3 1 9 1;b 172 519 9 11 2 1 10 1;b 190 538 10 8;o 118 533 66 68;o 124 539 54 56;o 134 549 36 38;g 99 540 10 9 1 6 1 10;g 122 607 9 11 6 1 9 1;g 186 535 8 9 1 5 1 11;s 88 590 18 30 5;c 95 620 3;
o 230 535 30 54;o 258 530 28 20;o 258 574 28 20;o 262 550 26 26;t 272 505 20 20;s 284 540 14 48 7;o 249 614 32 34;c 256 630 3;
O 318 527 18 13;t 318 542 18 12;c 352 617 17;c 352 617 11;s 330 575 40 18 9;b 318 608 11 14;s 298 598 30 40 10;t 374 612 12 16 3 1 14 1;
t 407 562 20 20;t 470 562 20 20;t 528 562 20 20;O 525 632 18 26;t 547 632 22 22;o 640 632 24 18;g 643 633 8 8 3 2 8 9;g 450 658 9 14 10 1 9 1;S 465 655 70 14 8;g 600 665 7 12 9 1 7 1;
s 535 460 30 48 12;t 580 475 20 20;b 581 502 10 12;t 580 514 20 18;s 608 480 38 38 12;s 650 562 60 38 12;t 672 524 18 18;b 688 556 8 11;o 697 556 16 20;b 685 588 9 12;g 697 590 20 9;t 738 525 18 20;g 722 535 8 10 1 5 1 10;
C 700 632 24;c 700 632 10;C 306 704 17;c 306 704 6;C 418 697 24;c 418 697 10;t 338 686 20 14;t 366 686 20 14;b 357 697 9 10;g 328 706 12 10;g 382 706 12 10;g 438 710 9 20;g 543 710 9 20;g 580 678 7 14;g 580 724 7 14;g 690 678 7 14;g 690 724 7 14;g 730 703 6 14;c 638 737 5;g 317 740 7 14;g 396 740 7 14;
s 710 60 50 90 22;b 723 72 12 10;t 715 234 16 14 2 1 16 1;s 735 195 60 50 14;b 778 170 12 9;s 730 375 80 40 10;b 750 470 14 8;s 745 395 60 75 12;t 765 478 18 14;t 790 478 18 14;s 755 160 40 30 8;g 778 110 10 8 3 6 11 11`],
  [1000, 600, `
C 242 517 24;c 242 517 10;C 405 494 17;c 405 494 7;c 260 393 25;c 260 393 14;C 466 433 3;
o 356 162 62 30 1 6 1 30;g 355 190 64 3 1 5 1 30;o 360 166 14 22 1 6 1 30;o 400 166 14 22 1 6 1 30;t 295 227 20 10 1 9 1 12;o 311 346 30 62;o 341 346 30 62;o 316 350 18 22;o 346 350 18 22;o 316 386 18 20;o 346 386 18 20;o 372 350 36 62;o 408 352 26 58;g 374 370 9 12 1 3 1 13;o 386 350 20 14;o 386 394 20 14;o 383 415 41 57;g 388 420 6 9 1 4 1 13;g 412 420 6 9 1 4 1 13;b 392 460 7 6;
o 58 392 172 100;o 58 392 172 44;g 78 384 5 8 26 1 5 1;o 59 418 12 16;o 216 418 12 16;b 82 364 10 18;b 62 364 16 10;b 97 358 12 12;b 117 370 14 9;g 60 352 18 10;t 112 360 18 12;b 84 395 8 5;s 62 350 70 14 6;
o 6 365 28 72;o -34 365 40 72;g 34 370 10 9 1 6 1 10;g 16 352 9 9 2 1 9 1;
t 244 428 24 18;c 236 436 4;s 290 418 65 38 20;s 345 405 40 30 10;c 288 478 6;c 305 478 6;c 322 478 6;g 0 478 7 12 4 1 9 1;g 126 506 6 6 10 1 6 1;g 124 516 6 6 11 1 6 1;
g 90 500 9 17;g 55 522 9 17;g 90 546 9 17;g 213 500 9 17;g 213 546 9 17;g 264 535 9 17;g 354 535 9 17;
g 34 197 6 10 1 3 1 12;g 54 218 6 9 2 4 7 8;g 40 220 5 8 2 3 6 9;g 70 200 6 12 1 3 1 18;g 101 200 6 11 1 8 1 16;g 124 200 6 11 1 7 1 17;g 160 196 6 11 1 8 1 15;g 174 196 7 11 1 2 1 14;g 208 200 6 11 1 7 1 17;g 234 210 6 11 1 6 1 18;g 266 198 7 10 1 4 1 12;b 65 250 8 16;b 266 270 8 16;g 0 202 5 9 1 7 1 18;g 273 218 9 9 1 3 1 10;t 14 298 20 14;t 82 298 20 14;t 118 292 20 12;t 142 292 16 10;t 172 292 20 14;t 194 292 18 14;g 228 296 16 7;g 246 296 16 7;
g 537 182 15 8 1 5 1 8;g 562 167 17 12 1 3 1 13;s 562 200 14 12 2;g 537 236 15 7 1 3 1 8;g 537 260 15 7 1 5 1 8;g 537 306 15 8 1 3 1 7;g 537 342 15 8 1 3 1 7;g 537 370 15 8 1 4 1 8;g 537 410 15 8 1 3 1 8;g 564 280 10 11;
s 455 212 40 32 12;s 442 240 20 24 4;g 487 201 26 6;g 494 272 18 7;s 450 285 38 28 12;s 437 306 20 22 4;g 483 320 28 7;s 455 350 40 32 12;s 440 380 20 24 4;g 483 422 28 7;s 424 152 20 30 5;
g 336 182 11 1;g 341 177 1 11;g 343 208 11 1;g 348 203 1 11;g 338 241 11 1;g 342 236 1 11;g 343 265 11 1;g 344 303 11 1;g 341 334 11 1;g 292 355 12 1;g 297 350 1 12;g 247 199 12 1;g 252 194 1 12`]
];

let seed = 7;
const rnd = () => (seed = (seed * 16807) % 2147483647) / 2147483647;
const GREY = '#c9c9c9', BLUE = '#7676fa';
const box = (x, y, w, h, stroke, fill) => `<rect x="${x}" y="${y}" width="${w}" height="${h}" stroke="${stroke}" fill="${fill}"/>`;

function part(kind, x, y, w, h) {
  if (kind === 'g') return box(x, y, w, h, GREY, '#e6e6e6');
  if (kind === 'b') return box(x, y, w, h, BLUE, '#b9b9ff') + box(x + w / 3, y + h / 3, w / 3, h / 3, 'none', BLUE);
  if (kind === 'o') return box(x, y, w, h, GREY, 'none');
  if (kind === 'O') return box(x, y, w, h, BLUE, 'none') + box(x + w / 4, y - 2, w / 2, h / 2, BLUE, '#fff');
  if (w > h) return box(x, y, w * 0.4, h, GREY, '#fff') + box(x + w * 0.6, y, w * 0.4, h, GREY, '#fff') + box(x + w * 0.4, y + 2, w * 0.2, h - 4, GREY, 'none');
  return box(x, y, w, h * 0.4, GREY, '#fff') + box(x, y + h * 0.6, w, h * 0.4, GREY, '#fff') + box(x + 2, y + h * 0.4, w - 4, h * 0.2, GREY, 'none');
}

function loose(kind, x, y, w, h, count) {
  let out = '';
  const cols = Math.max(1, Math.round(Math.sqrt(count * w / h)));
  const lines = Math.ceil(count / cols);
  for (let i = 0; i < count; i++) {
    const px = x + (i % cols + rnd() * 0.4) * w / cols;
    const py = y + (Math.floor(i / cols) + rnd() * 0.4) * h / lines;
    const wide = rnd() > 0.5;
    out += kind === 'S' ? box(px, py, 2, 2, BLUE, BLUE) : part('g', px, py, wide ? 11 : 8, wide ? 8 : 11);
  }
  return out;
}

document.getElementById('parts').innerHTML = zones.map(([ox, oy, data]) => {
  const body = data.split(';').map(s => s.trim()).filter(Boolean).map(entry => {
    const [kind, ...n] = entry.split(/\s+/);
    const [x, y, w, h, nx = 1, ny = 1, dx = 0, dy = 0] = n.map(Number);
    if (kind === 'c' || kind === 'C') return `<circle cx="${x}" cy="${y}" r="${w}" fill="none" stroke="${kind === 'C' ? '#9a9aff' : '#d4d4d4'}"/>`;
    if (kind === 's' || kind === 'S') return loose(kind, x, y, w, h, nx);
    let out = '';
    for (let i = 0; i < nx; i++) for (let j = 0; j < ny; j++) out += part(kind, x + i * dx, y + j * dy, w, h);
    return out;
  }).join('');
  return `<g transform="translate(${ox} ${oy}) scale(.33333)" stroke-width="1.800">${body}</g>`;
}).join('');
```
